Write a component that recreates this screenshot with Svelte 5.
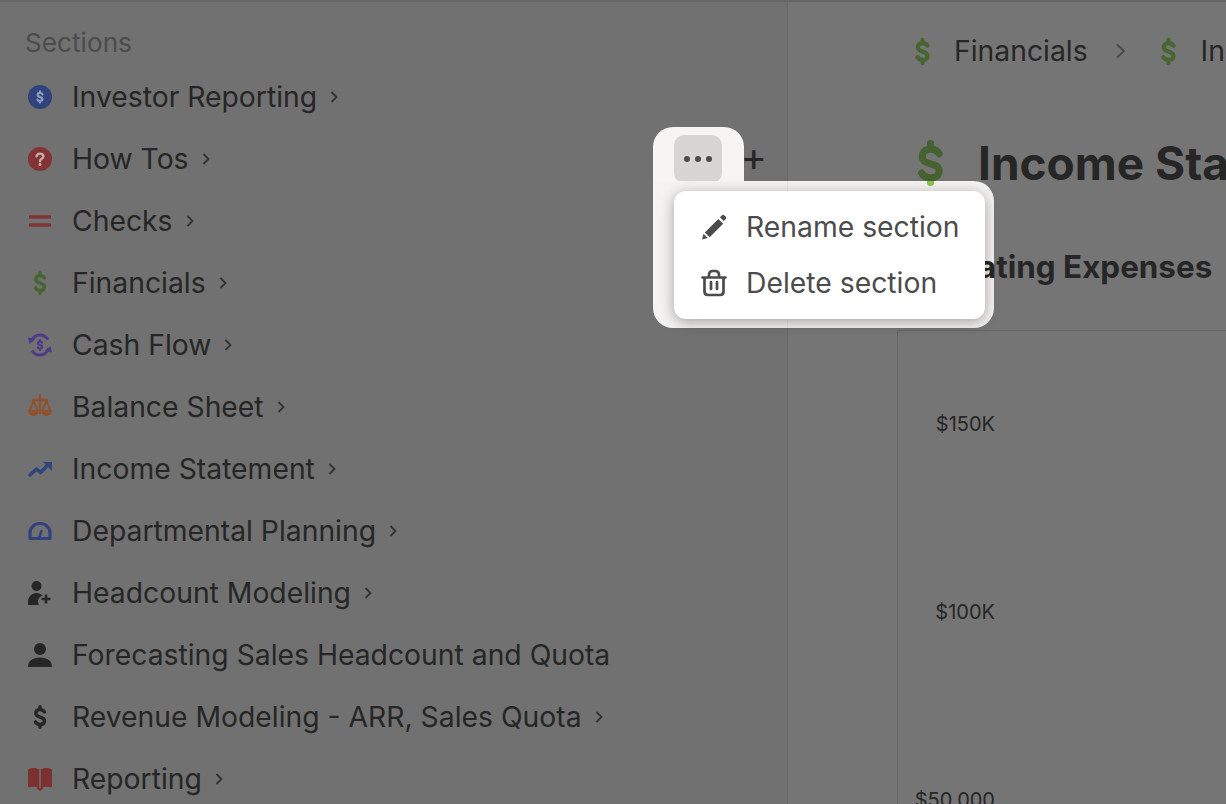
<script>
  const dollar = "M15.9 7.6C15.1 6.2 13.8 5.5 12 5.5 9.8 5.5 8.3 6.8 8.3 8.8 8.3 13.4 15.9 10.9 15.9 15.4 15.9 17.3 14.4 18.5 12.1 18.5 10.3 18.5 8.8 17.8 8 16.3M12 3v2.5M12 18.5V21";

  const sections = [
    { name: "Investor Reporting", icon: "coin", color: "#30437f" },
    { name: "How Tos", icon: "help", color: "#823434" },
    { name: "Checks", icon: "equals", color: "#823434" },
    { name: "Financials", icon: "dollar", color: "#486431" },
    { name: "Cash Flow", icon: "flow", color: "#4f3a8a" },
    { name: "Balance Sheet", icon: "scale", color: "#8f5230" },
    { name: "Income Statement", icon: "trend", color: "#30437f" },
    { name: "Departmental Planning", icon: "gauge", color: "#30437f" },
    { name: "Headcount Modeling", icon: "useradd", color: "#262626" },
    { name: "Forecasting Sales Headcount and Quota", icon: "user", color: "#262626", noChevron: true },
    { name: "Revenue Modeling - ARR, Sales Quota", icon: "dollar", color: "#262626" },
    { name: "Reporting", icon: "book", color: "#7c3030" }
  ];
</script>

<div class="app">
  <aside class="sidebar">
    <div class="heading">Sections</div>
    <ul>
      {#each sections as s, i}
        <li>
          <svg class="icon" viewBox="0 0 24 24" style="color: {s.color}">
            {#if s.icon === "coin"}
              <circle cx="12" cy="12" r="12" fill="currentColor" />
              <path d={dollar} transform="translate(4.56 4.56) scale(.62)" fill="none" stroke="#8f9bbd" stroke-width="3.6" stroke-linecap="round" />
            {:else if s.icon === "help"}
              <circle cx="12" cy="12" r="12" fill="currentColor" />
              <path d="M8.6 9.4C8.8 7.6 10.2 6.6 12 6.6c2 0 3.4 1.1 3.4 2.8 0 2.5-3.4 2.4-3.4 4.8" fill="none" stroke="#c4abab" stroke-width="2.4" stroke-linecap="round" />
              <circle cx="12" cy="17.6" r="1.5" fill="#c4abab" />
            {:else if s.icon === "equals"}
              <path d="M1 8h22M1 16h22" stroke="currentColor" stroke-width="3.4" fill="none" />
            {:else if s.icon === "dollar"}
              <path d={dollar} transform="translate(12 12) scale(1.14) translate(-12 -12)" fill="none" stroke="currentColor" stroke-width="3" stroke-linecap="round" />
            {:else if s.icon === "flow"}
              <path d="M3.5 8.5C5 4.5 8.2 2 12 2c3.500 0 6.300 1.800 8 4.600M20.500 15.500C19 19.500 15.800 22 12 22c-3.500 0-6.300-1.800-8-4.600" fill="none" stroke="currentColor" stroke-width="2.800" />
              <path d="M0 4.500l7 1.600-5.400 5zM24 19.500l-7-1.600 5.400-5z" fill="currentColor" />
              <path d={dollar} transform="translate(5.400 5.400) scale(.55)" fill="none" stroke="currentColor" stroke-width="4" stroke-linecap="round" />
            {:else if s.icon === "scale"}
              <path d="M12 0v4M5 5h14M12 4v14" stroke="currentColor" stroke-width="2.400" fill="none" stroke-linecap="round" />
              <path d="M5.500 6L2 15M5.500 6L9.500 15M18.500 6L14.500 15M18.500 6L22 15" stroke="currentColor" stroke-width="2" fill="none" />
              <path d="M0 15h11c0 3.400-2.400 6-5.500 6S0 18.400 0 15zM13 15h11c0 3.400-2.400 6-5.500 6S13 18.400 13 15z" fill="currentColor" />
            {:else if s.icon === "trend"}
              <path d="M2 18L8.500 12L12.500 15.500L19 9" fill="none" stroke="currentColor" stroke-width="3.400" stroke-linecap="round" stroke-linejoin="round" />
              <path d="M15 5H24V14z" fill="currentColor" />
            {:else if s.icon === "gauge"}
              <path d="M2 19.500V14C2 8.500 6.500 4.500 12 4.500S22 8.500 22 14V19.500z" fill="none" stroke="currentColor" stroke-width="3.200" stroke-linejoin="round" />
              <path d="M11 19l2.500-7" stroke="currentColor" stroke-width="2.600" stroke-linecap="round" />
            {:else if s.icon === "useradd"}
              <circle cx="8.500" cy="5" r="5" fill="currentColor" />
              <path d="M0 24v-3c0-5 3.500-9 8.500-9 2.500 0 4.500 1 6 2.500-3 1-4.500 3.500-4.500 6 0 1.300.4 2.500 1 3.500z" fill="currentColor" />
              <path d="M18 13.500v9M13.500 18h9" stroke="currentColor" stroke-width="2.600" />
            {:else if s.icon === "user"}
              <circle cx="12" cy="6" r="6" fill="currentColor" />
              <path d="M0 24c0-6 4.500-9.500 12-9.500S24 18 24 24z" fill="currentColor" />
            {:else if s.icon === "book"}
              <path d="M0 2.500C3 .500 7.500.500 11.300 2.500V21C7.500 19.500 3 19.500 1 20.500L0 19zM24 2.500C21 .500 16.500.500 12.700 2.500V21C16.500 19.500 21 19.500 23 20.500L24 19zM8 20.800L12 24L16 20.800z" fill="currentColor" />
            {/if}
          </svg>
          <span class="name">{s.name}</span>
          {#if !s.noChevron}
            <svg class="chev" viewBox="0 0 8 12"><path d="M1.500 1L6.500 6L1.500 11" fill="none" stroke="currentColor" stroke-width="1.800" /></svg>
          {/if}
          {#if i === 1}
            <span class="add">+</span>
          {/if}
        </li>
      {/each}
    </ul>
  </aside>

  <main class="main">
    <div class="crumbs">
      <svg class="crumb-icon" viewBox="0 0 24 24"><path d={dollar} fill="none" stroke="currentColor" stroke-width="3.200" stroke-linecap="round" /></svg>
      <span>Financials</span>
      <svg class="crumb-sep" viewBox="0 0 12 16"><path d="M2 1.500L9 8L2 14.500" fill="none" stroke="currentColor" stroke-width="1.900" /></svg>
      <svg class="crumb-icon second" viewBox="0 0 24 24"><path d={dollar} fill="none" stroke="currentColor" stroke-width="3.200" stroke-linecap="round" /></svg>
      <span>Income Statement</span>
    </div>
    <h1>
      <svg class="title-icon" viewBox="0 0 24 24"><path d={dollar} fill="none" stroke="currentColor" stroke-width="3.200" stroke-linecap="round" /></svg>
      Income Statement
    </h1>
    <h2>Operating Expenses</h2>
    <div class="chart">
      <div class="axis">
        <span>$150K</span>
        <span>$100K</span>
        <span>$50,000</span>
      </div>
    </div>
  </main>

  <!-- spotlight around the open menu -->
  <div class="spot">
    <div class="spot-tab">
      <div class="dots"><i></i><i></i><i></i></div>
    </div>
    <div class="spot-panel">
      <svg class="tip" viewBox="0 0 24 24"><path d={dollar} fill="none" stroke="currentColor" stroke-width="3.200" stroke-linecap="round" /></svg>
    </div>
    <div class="menu">
      <div class="item">
        <svg viewBox="0 0 24 24"><path d="M1 23.500l1.300-5.200 3.900 3.900zM3.500 17L16 4.500l4.500 4.500L8 21.500zM17.500 3l1.700-1.700c.7-.7 1.700-.7 2.400 0l1.100 1.100c.7.7.7 1.700 0 2.400L21 6.500z" fill="currentColor" /></svg>
        Rename section
      </div>
      <div class="item">
        <svg class="trash" viewBox="0 0 26 28"><path d="M1.500 8.500h23M8 8.500V6c0-2.500 1.500-4 4-4h2c2.500 0 4 1.500 4 4v2.500M3.500 8.500V22.500c0 2.300 1.200 3.500 3.500 3.500h12c2.300 0 3.500-1.200 3.500-3.500V8.500M10 13v7M16 13v7" fill="none" stroke="currentColor" stroke-width="2.700" stroke-linecap="round" /></svg>
        Delete section
      </div>
    </div>
  </div>
</div>

<style>
  :global(body) {
    margin: 0;
    overflow: hidden;
    background: #757575;
  }

  .app {
    position: relative;
    display: flex;
    width: 1226px;
    height: 804px;
    overflow: hidden;
    box-sizing: border-box;
    border-top: 2px solid #666;
    font-family: Inter, "Liberation Sans", sans-serif;
    color: #262626;
  }

  .sidebar {
    width: 788px;
    flex: none;
    box-sizing: border-box;
    padding: 25px 20px 0 25px;
    background: #717171;
    border-right: 1px solid #686868;
  }

  .heading {
    font-size: 26.2px;
    line-height: 32px;
    color: #4c4c4c;
    margin-bottom: 7px;
  }

  ul {
    list-style: none;
    margin: 0;
    padding: 0;
  }

  li {
    display: flex;
    align-items: center;
    height: 62px;
    padding-left: 3px;
    font-size: 28.3px;
  }

  .icon {
    width: 24px;
    height: 24px;
    flex: none;
    margin-right: 20px;
    overflow: visible;
  }

  .chev {
    width: 8px;
    height: 12px;
    margin-left: 13px;
    color: #333;
  }

  .add {
    margin-left: auto;
    padding-bottom: 4px;
    font-size: 40px;
    font-weight: 400;
    line-height: 1;
  }

  .main {
    flex: 1;
    min-width: 0;
    padding: 30px 0 0 125px;
    white-space: nowrap;
  }

  .crumbs {
    display: flex;
    align-items: center;
    height: 38px;
    font-size: 28.3px;
  }

  .crumb-icon {
    width: 31px;
    height: 31px;
    flex: none;
    margin: 0 16px 0 -6px;
    color: #486431;
  }

  .crumb-icon.second {
    margin-right: 17px;
  }

  .crumb-sep {
    width: 12px;
    height: 16px;
    flex: none;
    margin: 0 32px 0 27px;
    color: #4a4a4a;
  }

  h1 {
    display: flex;
    align-items: center;
    margin: 63px 0 0;
    height: 60px;
    font-size: 46px;
    font-weight: 700;
    gap: 21px;
  }

  .title-icon {
    width: 53px;
    height: 53px;
    flex: none;
    margin-left: -9px;
    color: #466230;
  }

  h2 {
    position: relative;
    z-index: 2;
    margin: 54px 0 0 -10px;
    height: 40px;
    line-height: 40px;
    font-size: 31.4px;
    font-weight: 700;
  }

  .chart {
    margin: 43px 0 0 -16px;
    height: 500px;
    border-top: 1px solid #686868;
    border-left: 1px solid #686868;
  }

  .axis {
    display: flex;
    flex-direction: column;
    align-items: flex-end;
    gap: 164px;
    width: 97px;
    padding-top: 81px;
    font-size: 20px;
    line-height: 24px;
  }

  .spot {
    position: absolute;
    left: 653px;
    top: 125px;
    width: 341px;
    height: 201px;
    color: #4c4c4c;
  }

  .spot-tab {
    position: absolute;
    left: 0;
    top: 0;
    width: 91px;
    height: 80px;
    background: #f6f5f4;
    border-radius: 20px 20px 0 0;
  }

  .dots {
    position: absolute;
    left: 21px;
    top: 8px;
    width: 48px;
    height: 48px;
    box-sizing: border-box;
    border-radius: 10px;
    background: #d7d6d4;
    display: flex;
    align-items: center;
    justify-content: center;
    gap: 5px;
  }

  .dots i {
    width: 6px;
    height: 6px;
    border-radius: 50%;
    background: #4c4c4c;
  }

  .spot-panel {
    position: absolute;
    left: 0;
    top: 54px;
    z-index: 1;
    width: 341px;
    height: 147px;
    overflow: hidden;
    background: #f4f3f2;
    border-radius: 0 20px 20px 20px;
  }

  .spot-panel::before {
    content: "";
    position: absolute;
    left: 134px;
    top: 0;
    width: 1px;
    height: 100%;
    background: rgba(0, 0, 0, 0.05);
  }

  .tip {
    position: absolute;
    left: 251px;
    top: -45px;
    width: 53px;
    height: 53px;
    color: #8bc34a;
  }

  .menu {
    position: absolute;
    left: 21px;
    top: 64px;
    z-index: 3;
    width: 311px;
    height: 128px;
    box-sizing: border-box;
    padding: 8px 0;
    background: #fff;
    border-radius: 12px;
    box-shadow: 0 3px 14px rgba(0, 0, 0, 0.34);
  }

  .item {
    display: flex;
    align-items: center;
    height: 56px;
    padding-left: 27px;
    gap: 19px;
    font-size: 28.3px;
  }

  .item svg {
    width: 26px;
    height: 26px;
    flex: none;
  }

  .item svg.trash {
    height: 28px;
  }
</style>
